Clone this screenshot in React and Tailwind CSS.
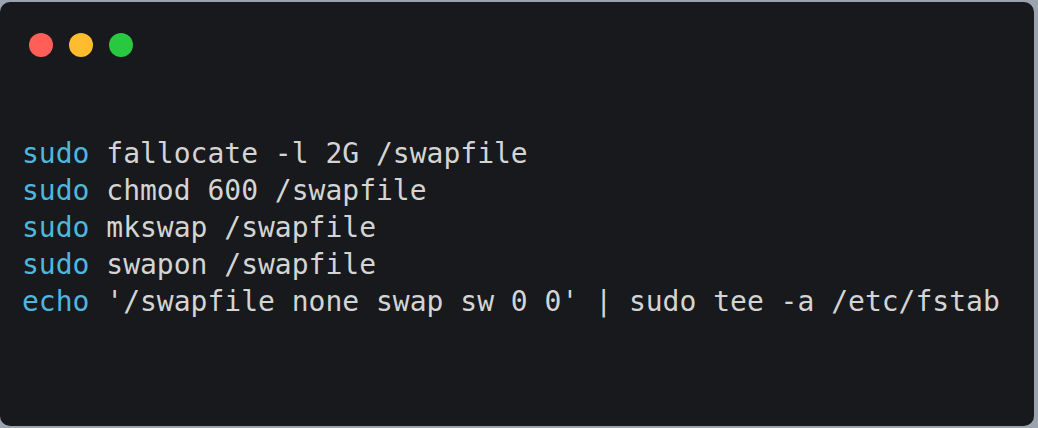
export default function App() {
  const lines = [
    ["sudo", " fallocate -l 2G /swapfile"],
    ["sudo", " chmod 600 /swapfile"],
    ["sudo", " mkswap /swapfile"],
    ["sudo", " swapon /swapfile"],
    ["echo", " '/swapfile none swap sw 0 0' | sudo tee -a /etc/fstab"],
  ];
  return (
    <div className="w-[1038px] h-[428px] bg-[#9ba4ae] pt-[2px] overflow-hidden">
      <div className="w-[1034px] h-[424px] bg-[#17191c] rounded-[10px] flex flex-col">
        <div className="flex gap-[16px] pl-[29px] pt-[31px]">
          <span className="w-[24px] h-[24px] rounded-full bg-[#ff5f57]" />
          <span className="w-[24px] h-[24px] rounded-full bg-[#febc2e]" />
          <span className="w-[24px] h-[24px] rounded-full bg-[#28c840]" />
        </div>
        <pre
          className="mt-[78px] pl-[22px] text-[28px] leading-[37px] text-[#d4d4d4]"
          style={{ fontFamily: '"DejaVu Sans Mono", monospace' }}
        >
          {lines.map(([k, rest], i) => (
            <div key={i}>
              <span className="text-[#4fb6dc]">{k}</span>
              {rest}
            </div>
          ))}
        </pre>
      </div>
    </div>
  );
}
